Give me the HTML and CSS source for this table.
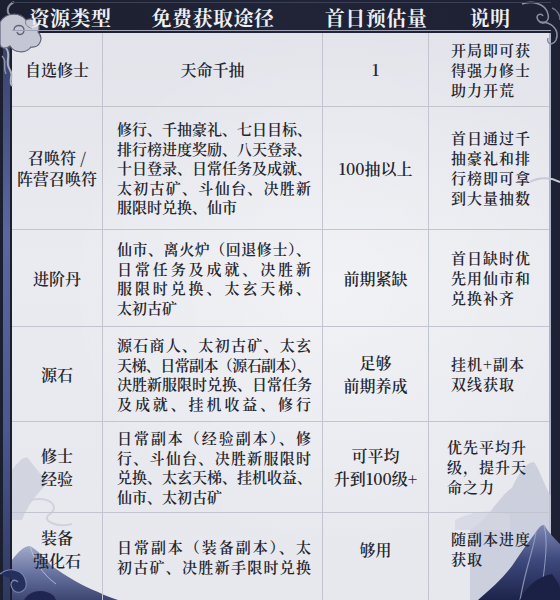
FILE: index.html
```html
<!DOCTYPE html>
<html lang="zh-CN">
<head>
<meta charset="utf-8">
<title>资源获取</title>
<link rel="stylesheet" href="styles.css">
</head>
<body>
<div class="frame">
  <div class="head">
    <div class="h h1">资源类型</div>
    <div class="h">免费获取途径</div>
    <div class="h">首日预估量</div>
    <div class="h">说明</div>
  </div>
  <div class="body">
    <div class="stripe"></div>
    <div class="panel">
      <!-- row 1 -->
      <div class="c c1">自选修士</div>
      <div class="c c3 wide">天命千抽</div>
      <div class="c c3">1</div>
      <div class="c c4"><div>开局即可获</div><div>得强力修士</div><div>助力开荒</div></div>
      <!-- row 2 -->
      <div class="c c1 tl">召唤符 /<br>阵营召唤符</div>
      <div class="c c2">
        <div class="j">修行、千抽豪礼、七日目标、</div>
        <div class="j">排行榜进度奖励、八天登录、</div>
        <div class="j">十日登录、日常任务及成就、</div>
        <div class="j">太初古矿、斗仙台、决胜新</div>
        <div>服限时兑换、仙市</div>
      </div>
      <div class="c c3">100抽以上</div>
      <div class="c c4"><div>首日通过千</div><div>抽豪礼和排</div><div>行榜即可拿</div><div>到大量抽数</div></div>
      <!-- row 3 -->
      <div class="c c1">进阶丹</div>
      <div class="c c2">
        <div class="j">仙市、离火炉（回退修士）、</div>
        <div class="j">日常任务及成就、决胜新</div>
        <div class="j">服限时兑换、太玄天梯、</div>
        <div>太初古矿</div>
      </div>
      <div class="c c3">前期紧缺</div>
      <div class="c c4"><div>首日缺时优</div><div>先用仙市和</div><div>兑换补齐</div></div>
      <!-- row 4 -->
      <div class="c c1">源石</div>
      <div class="c c2">
        <div class="j">源石商人、太初古矿、太玄</div>
        <div class="j t">天梯、日常副本（源石副本）、</div>
        <div class="j">决胜新服限时兑换、日常任务</div>
        <div class="j">及成就、挂机收益、修行</div>
      </div>
      <div class="c c3">足够<br>前期养成</div>
      <div class="c c4"><div>挂机+副本</div><div>双线获取</div></div>
      <!-- row 5 -->
      <div class="c c1">修士<br>经验</div>
      <div class="c c2">
        <div class="j">日常副本（经验副本）、修</div>
        <div class="j">行、斗仙台、决胜新服限时</div>
        <div class="j">兑换、太玄天梯、挂机收益、</div>
        <div>仙市、太初古矿</div>
      </div>
      <div class="c c3">可平均<br>升到100级+</div>
      <div class="c c4 l5"><div>优先平均升</div><div>级，提升天</div><div>命之力</div></div>
      <!-- row 6 -->
      <div class="c c1 last">装备<br>强化石</div>
      <div class="c c2 last">
        <div class="j">日常副本（装备副本）、太</div>
        <div class="j">初古矿、决胜新手限时兑换</div>
      </div>
      <div class="c c3 last">够用</div>
      <div class="c c4 last"><div>随副本进度</div><div>获取</div></div>
    </div>
  </div>
  <svg class="deco" width="560" height="600" viewBox="0 0 560 600" aria-hidden="true">
    <defs>
      <linearGradient id="mtn" x1="0" y1="0" x2="0" y2="1">
        <stop offset="0" stop-color="#7d87b3"/>
        <stop offset="0.45" stop-color="#3f4a7e"/>
        <stop offset="1" stop-color="#1d244a"/>
      </linearGradient>
      <linearGradient id="mtn2" x1="0" y1="0" x2="0" y2="1">
        <stop offset="0" stop-color="#9aa2c6"/>
        <stop offset="0.5" stop-color="#5a6698"/>
        <stop offset="1" stop-color="#2a3462"/>
      </linearGradient>
    </defs>
    <!-- top-left cloud -->
    <path d="M14 2 C6 6 6 14 12 16" fill="none" stroke="#8c90a3" stroke-width="2"/>
    <path d="M0 22 C6 12 20 12 26 20 C34 16 42 24 38 32 C44 38 40 48 31 47 C26 54 14 53 10 46 C5 50 0 48 0 44 Z" fill="#c4c6d3" stroke="#5d6277" stroke-width="1.2"/>
    <path d="M14 30 C14 24 24 24 24 30 C24 35 18 36 17 32" fill="none" stroke="#5d6277" stroke-width="1.3"/>
    <path d="M26 20 C24 24 28 28 32 28" fill="none" stroke="#7a7f94" stroke-width="1"/>
    <path d="M6 48 C12 56 4 62 10 70 C14 76 8 80 12 86" fill="none" stroke="#aeb1c1" stroke-width="2"/>
    <path d="M2 56 C8 62 2 66 6 74" fill="none" stroke="#8f93a6" stroke-width="1.5"/>
    <!-- top-right swirl -->
    <path d="M522 4 C532 0 546 4 548 14 C550 22 542 26 538 20 C535 15 541 12 543 16" fill="none" stroke="#8a8ea3" stroke-width="1.5"/>
    <path d="M540 22 C552 22 560 30 556 40 C553 46 546 44 548 38" fill="none" stroke="#8a8ea3" stroke-width="1.5"/>
    <path d="M552 8 C558 10 560 16 560 20" fill="none" stroke="#6e7388" stroke-width="1.5"/>
    <!-- right mid wisp -->
    <path d="M530 182 C540 176 552 178 560 182" fill="none" stroke="#c6c9d6" stroke-width="2"/>
    <!-- light washes -->
    <path d="M470 530 C488 520 500 495 512 488 C520 470 528 462 534 462 C540 470 546 490 551 496 L551 600 L470 600 Z" fill="#c3c7d7" opacity="0.75"/>
    <path d="M455 520 C470 512 490 508 510 515 L510 530 L455 530 Z" fill="#d3d6e1" opacity="0.8"/>
    <path d="M12 520 L12 470 C18 462 24 456 28 458 C34 466 40 474 48 482 C40 492 30 500 22 520 Z" fill="#c9ccd9" opacity="0.7"/>
    <path d="M30 500 C50 496 60 506 50 514 C40 520 56 528 72 524" fill="none" stroke="#d0d3de" stroke-width="2"/>
    <!-- bottom-right dark mountain -->
    <path d="M478 600 C492 588 506 576 516 560 C524 548 530 540 536 532 C540 526 544 522 546 528 C550 534 556 540 560 544 L560 600 Z" fill="url(#mtn)"/>
    <path d="M536 532 C534 548 526 566 520 600" fill="none" stroke="#9aa2c6" stroke-width="1.2" opacity="0.8"/>
    <path d="M544 526 C548 540 546 560 540 600" fill="none" stroke="#b7bdd8" stroke-width="1" opacity="0.7"/>
    <path d="M520 600 C528 584 540 576 552 574 C556 580 560 584 560 590 L560 600 Z" fill="#1b2145"/>
    <!-- bottom-left mountain / waves -->
    <path d="M12 560 C18 552 24 546 30 546 C38 550 44 558 52 566 C66 576 82 586 98 592 C106 596 112 598 118 600 L12 600 Z" fill="url(#mtn2)" opacity="0.9"/>
    <path d="M30 546 C34 560 42 574 56 584" fill="none" stroke="#c3c9e2" stroke-width="1" opacity="0.8"/>
    <path d="M0 574 C10 566 24 570 26 582 C28 592 16 596 12 588 C9 582 14 578 18 582" fill="#25305c" stroke="#7b86b2" stroke-width="1.2"/>
    <path d="M24 600 C30 590 44 588 54 596 L56 600 Z" fill="#1d2550"/>
  </svg>
</div>
</body>
</html>
```
FILE: styles.css
```css
* { box-sizing: border-box; }

body {
  margin: 0;
  background: #1d2030;
}

.frame {
  position: relative;
  width: 560px;
  height: 600px;
  overflow: hidden;
  background: linear-gradient(90deg, #1c1f2f 0%, #202436 50%, #1d2133 100%);
  font-family: "Noto Serif CJK SC", "Noto Sans CJK SC", serif;
  color: #24252d;
}

.head {
  position: relative;
  z-index: 1;
  margin: 2px 0 2px 12px;
  height: 29px;
  width: 539px;
  border-top: 1px solid #3c4054;
  border-bottom: 1px solid #9ea2b3;
  display: grid;
  grid-template-columns: 91px 220px 106px 122px;
}

.h {
  display: flex;
  align-items: center;
  justify-content: center;
  padding-bottom: 3px;
  font-size: 20px;
  font-weight: 700;
  letter-spacing: 0.5px;
  color: #eff0f4;
  white-space: nowrap;
}

.h1 { padding-left: 26px; }

.body {
  display: flex;
  height: 567px;
}

.stripe {
  width: 7px;
  margin: 0 2px 0 3px;
  background: linear-gradient(180deg, #36406a 0%, #5a67a0 35%, #4b5890 70%, #2f3860 100%);
}

.panel {
  width: 539px;
  height: 567px;
  border-right: 2px solid #aeb2c8;
  background:
    radial-gradient(ellipse at 60% 45%, rgba(255,255,255,0.35), rgba(255,255,255,0) 60%),
    linear-gradient(180deg, #e3e4eb 0%, #eaebf0 40%, #e7e8ee 100%);
  display: grid;
  grid-template-columns: 91px 220px 106px 120px;
  grid-template-rows: 74px 123px 97px 95px 91px 1fr;
}

.c {
  position: relative;
  z-index: 1;
  border-right: 1px solid #c2c5d0;
  border-bottom: 1px solid #c2c5d0;
  display: flex;
  flex-direction: column;
  justify-content: center;
  font-weight: 600;
}

.c4 { border-right: none; }
.last { border-bottom: none; padding-bottom: 15px; }

.c1 {
  align-items: center;
  text-align: center;
  font-size: 16px;
  line-height: 23px;
}

.c1.tl { line-height: 21px; }

.c2 {
  padding: 0 11px 0 14px;
  font-size: 15px;
  line-height: 19.5px;
}

.j {
  text-align: justify;
  text-align-last: justify;
  white-space: nowrap;
}

.t { letter-spacing: -0.8px; }

.c3 {
  align-items: center;
  text-align: center;
  font-size: 16px;
  line-height: 23px;
}

.c4 {
  padding-left: 22px;
  font-size: 15px;
  letter-spacing: 1px;
  line-height: 20px;
  white-space: nowrap;
}

.l5 { padding-left: 18px; }

.deco {
  position: absolute;
  left: 0;
  top: 0;
  z-index: 0;
  pointer-events: none;
}
```
